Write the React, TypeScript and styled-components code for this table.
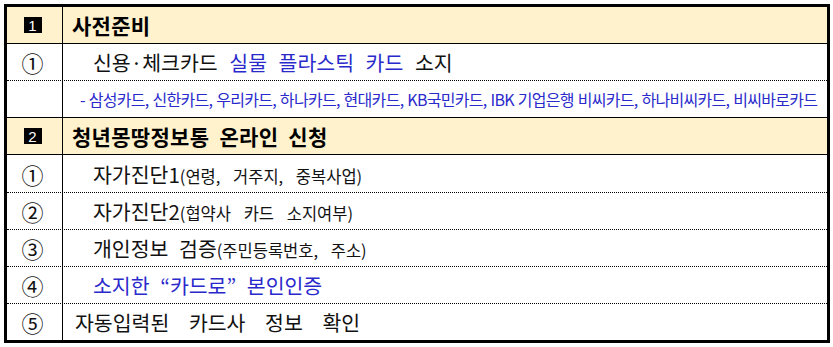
import React from 'react';
import styled, {createGlobalStyle} from 'styled-components';

const GlobalStyle = createGlobalStyle`
  html, body {
    margin: 0;
    padding: 0;
    background: #ffffff;
  }
  body {
    font-family: "Noto Sans CJK KR", "Noto Sans", sans-serif;
    color: #111;
  }
`;

const Page = styled.div`
  padding: 4px 3px 4px 4px;
  width: 833px;
  box-sizing: border-box;
`;

const Frame = styled.div`
  width: 826px;
  box-sizing: border-box;
  border: 3px solid #000;
  display: flex;
  flex-direction: column;
`;

const Row = styled.div<{$head?: boolean; $line?: 'solid' | 'dotted' | 'none'; $h: number}>`
  display: grid;
  grid-template-columns: 55px 1px 1fr;
  height: ${p => p.$h}px;
  box-sizing: border-box;
  background: ${p => (p.$head ? '#fff2cc' : '#ffffff')};
  border-bottom: ${p => (p.$line === 'none' ? '0' : `1px ${p.$line || 'solid'} #000`)};
`;

const Divider = styled.div`
  background: #000;
`;

const NumCell = styled.div`
  display: flex;
  align-items: center;
  justify-content: center;
  padding-right: 4px;
  font-size: 22px;
  line-height: 1;
`;

const Badge = styled.span`
  display: inline-flex;
  align-items: center;
  justify-content: center;
  width: 18px;
  height: 16px;
  background: #000;
  color: #fff;
  font-family: "Liberation Sans", sans-serif;
  font-size: 15px;
`;

const TextCell = styled.div<{$indent?: number; $ws?: number}>`
  display: flex;
  align-items: center;
  padding-left: ${p => p.$indent ?? 30}px;
  white-space: pre;
  font-size: 20.5px;
  word-spacing: ${p => p.$ws ?? 6}px;
`;

const HeadText = styled(TextCell)`
  font-weight: bold;
  font-size: 21px;
  letter-spacing: 0.3px;
  word-spacing: 5px;
  color: #000;
`;

const Blue = styled.span`
  color: #2a2acc;
`;

const Small = styled.span`
  font-size: 16.5px;
  word-spacing: 9px;
`;

const CardList = styled(TextCell)`
  font-size: 16px;
  letter-spacing: -0.7px;
  word-spacing: 1px;
  color: #2a2acc;
`;

export default function App() {
  return (
    <Page>
      <GlobalStyle/>
      <Frame>
        <Row $head $h={37}>
          <NumCell><Badge>1</Badge></NumCell>
          <Divider/>
          <HeadText $indent={9}><span>사전준비</span></HeadText>
        </Row>
        <Row $line="dotted" $h={37}>
          <NumCell>①</NumCell>
          <Divider/>
          <TextCell $ws={7}><span>신용·체크카드 <Blue>실물 플라스틱 카드</Blue> 소지</span></TextCell>
        </Row>
        <Row $h={37}>
          <NumCell/>
          <Divider/>
          <CardList $indent={17}>
            <span>- 삼성카드, 신한카드, 우리카드, 하나카드, 현대카드, KB국민카드, IBK 기업은행 비씨카드, 하나비씨카드, 비씨바로카드</span>
          </CardList>
        </Row>
        <Row $head $h={37}>
          <NumCell><Badge>2</Badge></NumCell>
          <Divider/>
          <HeadText $indent={9}><span>청년몽땅정보통 온라인 신청</span></HeadText>
        </Row>
        <Row $line="dotted" $h={38}>
          <NumCell>①</NumCell>
          <Divider/>
          <TextCell><span>자가진단1<Small>(연령, 거주지, 중복사업)</Small></span></TextCell>
        </Row>
        <Row $line="dotted" $h={37}>
          <NumCell>②</NumCell>
          <Divider/>
          <TextCell><span>자가진단2<Small>(협약사 카드 소지여부)</Small></span></TextCell>
        </Row>
        <Row $line="dotted" $h={37}>
          <NumCell>③</NumCell>
          <Divider/>
          <TextCell><span>개인정보 검증<Small>(주민등록번호, 주소)</Small></span></TextCell>
        </Row>
        <Row $line="dotted" $h={37}>
          <NumCell>④</NumCell>
          <Divider/>
          <TextCell><span><Blue>소지한 “카드로” 본인인증</Blue></span></TextCell>
        </Row>
        <Row $line="none" $h={36}>
          <NumCell>⑤</NumCell>
          <Divider/>
          <TextCell $indent={12} $ws={15}><span>자동입력된 카드사 정보 확인</span></TextCell>
        </Row>
      </Frame>
    </Page>
  );
}
